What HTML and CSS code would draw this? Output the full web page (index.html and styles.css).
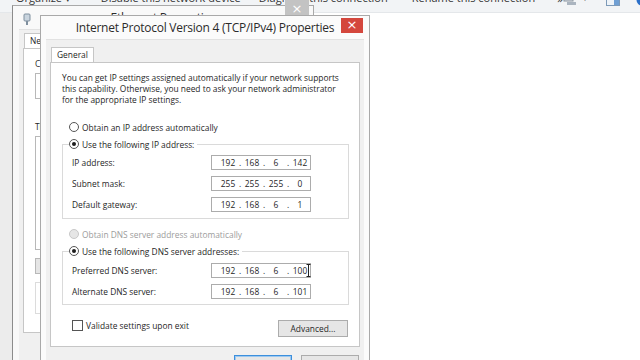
FILE: index.html
```html
<!DOCTYPE html>
<html lang="en">
<head>
    <meta charset="UTF-8">
    <title>Internet Protocol Version 4 (TCP/IPv4) Properties</title>
    <link rel="stylesheet" href="styles.css">
</head>
<body>

    <div class="toolbar">
        <span class="tb-item" style="margin-left: 16px">Organize &#9662;</span>
        <span class="tb-item" style="margin-left: 30px">Disable this network device</span>
        <span class="tb-item" style="margin-left: 18px">Diagnose this connection</span>
        <span class="tb-item" style="margin-left: 24px">Rename this connection</span>
        <span class="tb-more">&raquo;</span>
        <div class="tb-icons">
            <svg class="tb-view" width="14" height="12" viewBox="0 0 14 12"><rect x="1" y="1" width="9" height="6" fill="#d8dde4" stroke="#8a939e"/><rect x="4" y="8" width="9" height="3" fill="#aab4bf"/></svg>
            <span class="tb-caret">&#9662;</span>
            <svg class="tb-pane" width="14" height="12" viewBox="0 0 14 12"><rect x="0.5" y="0.5" width="13" height="11" fill="#eef3f8" stroke="#7d9ab8"/><rect x="8" y="1" width="5" height="10" fill="#6f9fd3"/></svg>
            <svg class="tb-help" width="12" height="12" viewBox="0 0 12 12"><circle cx="6" cy="6" r="5.5" fill="#2a6fc9"/><text x="6" y="9" text-anchor="middle" font-size="8" font-family="Liberation Sans" fill="#fff" font-weight="bold">?</text></svg>
        </div>
    </div>

    <div class="desktop">
        <div class="side-strip"></div>

        <!-- background window -->
        <div class="window eth-window">
            <div class="titlebar">
                <svg class="win-icon" width="8" height="13" viewBox="0 0 8 13"><rect x="1" y="1" width="6" height="7" rx="1" fill="#c9d4de" stroke="#7f8f9e"/><rect x="3" y="8" width="2" height="4" fill="#7f8f9e"/></svg>
                <span class="title-text">Ethernet Properties</span>
                <span class="close-btn grey">&times;</span>
            </div>
            <div class="eth-client">
                <div class="tab eth-tab">Networking</div>
                <div class="panel eth-panel">
                    <div class="eth-label">Connect using:</div>
                    <div class="eth-box adapter"></div>
                    <div class="eth-label">This connection uses the following items:</div>
                    <div class="eth-box items"></div>
                    <div class="eth-box eth-btn"></div>
                    <div class="eth-box eth-desc"></div>
                </div>
            </div>
        </div>

        <!-- front dialog -->
        <div class="window ip-dialog">
            <div class="titlebar">
                <span class="title-text">Internet Protocol Version 4 (TCP/IPv4) Properties</span>
                <span class="close-btn red">&times;</span>
            </div>
            <div class="client">
                <div class="tab">General</div>
                <div class="panel">
                    <p class="intro">You can get IP settings assigned automatically if your network supports<br>this capability. Otherwise, you need to ask your network administrator<br>for the appropriate IP settings.</p>

                    <div class="radio-row first">
                        <span class="radio"></span>Obtain an IP address automatically
                    </div>

                    <fieldset class="group ip-group">
                        <legend><span class="radio checked"></span>Use the following IP address:</legend>
                        <div class="field-grid">
                            <span>IP address:</span>
                            <div class="ipbox"><span>192</span><i>.</i><span>168</span><i>.</i><span>6</span><i>.</i><span>142</span></div>
                            <span>Subnet mask:</span>
                            <div class="ipbox"><span>255</span><i>.</i><span>255</span><i>.</i><span>255</span><i>.</i><span>0</span></div>
                            <span>Default gateway:</span>
                            <div class="ipbox"><span>192</span><i>.</i><span>168</span><i>.</i><span>6</span><i>.</i><span>1</span></div>
                        </div>
                    </fieldset>

                    <div class="radio-row disabled">
                        <span class="radio"></span>Obtain DNS server address automatically
                    </div>

                    <fieldset class="group dns-group">
                        <legend><span class="radio checked"></span>Use the following DNS server addresses:</legend>
                        <div class="field-grid">
                            <span>Preferred DNS server:</span>
                            <div class="ipbox"><span>192</span><i>.</i><span>168</span><i>.</i><span>6</span><i>.</i><span>100</span>
                                <svg class="ibeam" width="5" height="13" viewBox="0 0 5 13"><path d="M0.5 0.5h4M0.5 12.5h4M2.5 0.5v12" stroke="#222" fill="none"/></svg>
                            </div>
                            <span>Alternate DNS server:</span>
                            <div class="ipbox"><span>192</span><i>.</i><span>168</span><i>.</i><span>6</span><i>.</i><span>101</span></div>
                        </div>
                    </fieldset>

                    <div class="bottom-row">
                        <label class="check"><span class="checkbox"></span>Validate settings upon exit</label>
                        <button class="btn" type="button">Advanced...</button>
                    </div>
                </div>
                <div class="dialog-buttons">
                    <button class="btn default" type="button">OK</button>
                    <button class="btn" type="button">Cancel</button>
                </div>
            </div>
        </div>
    </div>

</body>
</html>
```

FILE: styles.css
```css
body {
    margin: 0;
    width: 640px;
    height: 360px;
    overflow: hidden;
    background-color: #ffffff;
    font-family: "Open Sans", "Noto Sans", sans-serif;
    font-size: 8.4px;
    color: #262626;
}

/* explorer toolbar, mostly scrolled off the top */
.toolbar {
    height: 12px;
    background-color: #f2f4f6;
    border-bottom: 1px solid #e4e7ea;
    display: flex;
    align-items: flex-start;
    font-size: 11px;
    color: #333;
    white-space: nowrap;
    overflow: hidden;
}

.tb-item {
    margin-top: -10px;
}

.tb-more {
    margin-left: 22px;
    margin-top: -9px;
}

.tb-icons {
    margin-left: auto;
    margin-right: 12px;
    display: flex;
    align-items: flex-start;
}

.tb-icons svg {
    margin-top: -6px;
    flex-shrink: 0;
}

.tb-caret {
    margin: -8px 0 0 6px;
    font-size: 8px;
}

.tb-pane {
    margin-left: 19px;
}

.tb-help {
    margin-left: 16px;
}

.desktop {
    position: relative;
    height: 347px;
}

.side-strip {
    width: 12px;
    height: 100%;
    background-color: #ececec;
}

.window {
    position: absolute;
    background-color: #f9f9f9;
    border: 1px solid #a9a9a9;
    box-sizing: border-box;
}

.titlebar {
    height: 23px;
    position: relative;
    display: flex;
    align-items: center;
    justify-content: center;
}

.title-text {
    font-size: 12px;
    color: #2b2b2b;
    letter-spacing: -0.25px;
}

.close-btn {
    position: absolute;
    top: 2px;
    right: 6px;
    width: 22px;
    height: 15px;
    color: #fff;
    font-size: 13px;
    line-height: 14px;
    text-align: center;
    font-family: "DejaVu Sans", sans-serif;
}

.close-btn.red {
    background-color: #d4473d;
}

.close-btn.grey {
    background-color: #c3c3c3;
    top: -17px;
    right: 4px;
    height: 27px;
    width: 24px;
    line-height: 40px;
}

/* ethernet properties (behind) */
.eth-window {
    left: 12px;
    top: -8px;
    width: 302px;
    height: 380px;
    border-left-color: #8c8c8c;
}

.win-icon {
    position: absolute;
    left: 10px;
    top: 7px;
}

.eth-client {
    margin: 0 6px;
    height: 340px;
    background-color: #f0f0f0;
    border-top: 1px solid #e2e2e2;
    padding: 3px 4px 0 4px;
    box-sizing: border-box;
    overflow: hidden;
}

.eth-tab {
    margin-left: 0;
}

.eth-panel {
    width: 40px;
    height: 291px;
    padding: 6px 0 0 12px;
    overflow: hidden;
}

.eth-label {
    line-height: 12px;
    margin-bottom: 3px;
    white-space: nowrap;
}

.eth-box {
    border: 1px solid #b8b8b8;
    background-color: #fff;
    margin-bottom: 8px;
}

.adapter {
    height: 24px;
    margin-bottom: 22px;
}

.items {
    height: 112px;
}

.eth-btn {
    width: 60px;
    height: 14px;
    background-color: #e5e5e5;
}

.eth-desc {
    height: 30px;
    border-color: #dcdcdc;
    background-color: transparent;
}

/* front dialog */
.ip-dialog {
    left: 40px;
    top: 2px;
    width: 330px;
    height: 380px;
    background-color: #fbfbfb;
}

.client {
    margin: 0 5px;
    background-color: #f0f0f0;
    border-top: 1px solid #e2e2e2;
    padding: 7px 4px 0 4px;
    height: 340px;
    box-sizing: border-box;
}

.tab {
    display: inline-block;
    height: 15px;
    line-height: 14px;
    padding: 0 5px;
    margin-left: 1px;
    background-color: #fff;
    border: 1px solid #c6c6c6;
    border-bottom: none;
    box-sizing: border-box;
    vertical-align: top;
}

.panel {
    background-color: #fff;
    border: 1px solid #c6c6c6;
    height: 285px;
    box-sizing: border-box;
    padding: 9px 10px 0 11px;
}

.intro {
    margin: 0;
    line-height: 11px;
    white-space: nowrap;
}

.radio-row {
    display: flex;
    align-items: center;
    height: 12px;
    margin-left: 7px;
}

.radio-row.first {
    margin-top: 16px;
}

.radio-row.disabled {
    margin-top: 9px;
    color: #9c9c9c;
}

.radio {
    width: 10px;
    height: 10px;
    box-sizing: border-box;
    border: 1px solid #555;
    border-radius: 50%;
    background-color: #fff;
    margin-right: 3px;
    display: inline-flex;
    align-items: center;
    justify-content: center;
    flex-shrink: 0;
}

.radio.checked::after {
    content: "";
    width: 4px;
    height: 4px;
    border-radius: 50%;
    background-color: #1c1c1c;
}

.disabled .radio {
    border-color: #c8c8c8;
    background-color: #e6e6e6;
}

.group {
    margin: 5px 0 0 0;
    border: 1px solid #dadada;
    padding: 5px 0 6px 9px;
    min-width: 0;
}

.group legend {
    display: flex;
    align-items: center;
    height: 12px;
    padding: 0 3px 0 0;
    margin-left: -3px;
}

.dns-group {
    padding-top: 6px;
    padding-bottom: 5px;
}

.field-grid {
    display: grid;
    grid-template-columns: 139px 100px;
    row-gap: 6px;
    align-items: center;
}

.ipbox {
    position: relative;
    height: 15px;
    border: 1px solid #acacac;
    box-sizing: border-box;
    display: flex;
    align-items: center;
    padding-left: 6px;
    line-height: 12px;
}

.ipbox span {
    width: 20px;
    text-align: center;
}

.ipbox i {
    font-style: normal;
    width: 4px;
    text-align: center;
}

.ibeam {
    position: absolute;
    left: 94px;
    top: 0px;
}

.bottom-row {
    margin-top: 15px;
    display: flex;
    justify-content: space-between;
    align-items: flex-start;
}

.check {
    display: flex;
    align-items: center;
    height: 12px;
    margin-left: 10px;
    margin-top: -1px;
}

.checkbox {
    width: 11px;
    height: 11px;
    box-sizing: border-box;
    border: 1px solid #555;
    background-color: #fff;
    margin-right: 3px;
}

.btn {
    font-family: inherit;
    font-size: 8.4px;
    color: #262626;
    height: 17px;
    width: 70px;
    padding: 0;
    margin-right: 1px;
    background-color: #e6e6e6;
    border: 1px solid #acacac;
}

.dialog-buttons {
    display: flex;
    justify-content: flex-end;
    gap: 8px;
    margin-top: 8px;
}

.dialog-buttons .btn {
    width: 58px;
    height: 18px;
}

.btn.default {
    border-color: #3c8fdc;
    box-shadow: inset 0 0 0 1px #9cc8f0;
}
```
